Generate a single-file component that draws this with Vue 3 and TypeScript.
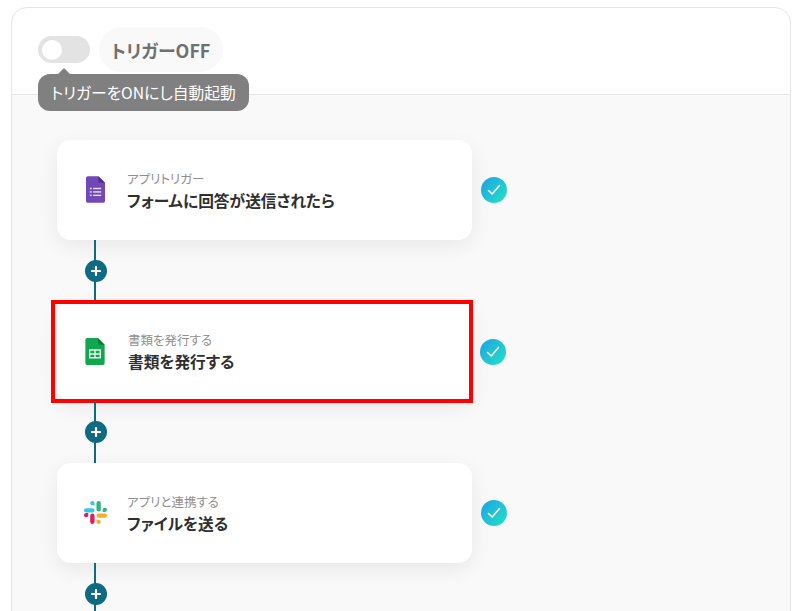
<script setup lang="ts">
interface Step { kicker: string; title: string; icon: 'forms' | 'sheets' | 'slack'; highlighted?: boolean }
const steps: Step[] = [
  { kicker: 'アプリトリガー', title: 'フォームに回答が送信されたら', icon: 'forms' },
  { kicker: '書類を発行する', title: '書類を発行する', icon: 'sheets', highlighted: true },
  { kicker: 'アプリと連携する', title: 'ファイルを送る', icon: 'slack' },
]
</script>

<template>
  <div class="page">
    <section class="panel">
      <header class="head">
        <span class="toggle"><span class="knob"></span></span>
        <span class="state">トリガーOFF</span>
        <span class="tip">トリガーをONにし自動起動</span>
      </header>
      <main class="flow">
        <div v-for="s in steps" :key="s.title" class="step">
          <div class="row">
            <article class="card" :class="{ marked: s.highlighted }">
              <span class="icon">
                <svg v-if="s.icon === 'forms'" width="19" height="27" viewBox="0 0 20 28">
                  <path d="M2 0h11l7 7v19a2 2 0 0 1-2 2H2a2 2 0 0 1-2-2V2a2 2 0 0 1 2-2z" fill="#7248b9" />
                  <path d="M13 0l7 7h-5a2 2 0 0 1-2-2z" fill="#4f2f91" />
                  <g fill="#e6dcf5">
                    <rect x="4" y="12.200" width="2" height="1.500" /><rect x="7.500" y="12.200" width="8.500" height="1.500" />
                    <rect x="4" y="15.800" width="2" height="1.500" /><rect x="7.500" y="15.800" width="8.500" height="1.500" />
                    <rect x="4" y="19.400" width="2" height="1.500" /><rect x="7.500" y="19.400" width="8.500" height="1.500" />
                  </g>
                </svg>
                <svg v-else-if="s.icon === 'sheets'" width="20" height="27" viewBox="0 0 20 28">
                  <path d="M2 0h11l7 7v19a2 2 0 0 1-2 2H2a2 2 0 0 1-2-2V2a2 2 0 0 1 2-2z" fill="#11a74f" />
                  <path d="M13 0l7 7h-5a2 2 0 0 1-2-2z" fill="#0b7d3b" />
                  <path d="M4.500 12.500h11v8h-11zM10 12.500v8M4.500 16.500h11" fill="none" stroke="#e4f6ea" stroke-width="1.500" />
                </svg>
                <svg v-else width="25" height="25" viewBox="0 0 26 26">
                  <g fill="#36c5f0">
                    <rect x="1" y="8.500" width="11" height="4.500" rx="2.250" />
                    <path d="M9.750 1a2.250 2.250 0 0 1 2.250 2.250V5.500H9.750a2.250 2.250 0 0 1 0-4.500z" />
                  </g>
                  <g fill="#2eb67d">
                    <rect x="14" y="1" width="4.500" height="11" rx="2.250" />
                    <path d="M25 10.250A2.250 2.250 0 0 1 22.750 12.500H20.500v-2.250a2.250 2.250 0 0 1 4.500 0z" />
                  </g>
                  <g fill="#ecb22e">
                    <rect x="14" y="14" width="11" height="4.500" rx="2.250" />
                    <path d="M16.250 25a2.250 2.250 0 0 1-2.250-2.250V20.500h2.250a2.250 2.250 0 0 1 0 4.500z" />
                  </g>
                  <g fill="#e01e5a">
                    <rect x="7.500" y="14" width="4.500" height="11" rx="2.250" />
                    <path d="M1 15.750A2.250 2.250 0 0 1 3.250 13.500H5.500v2.250a2.250 2.250 0 0 1-4.500 0z" />
                  </g>
                </svg>
              </span>
              <div class="copy">
                <p class="kicker">{{ s.kicker }}</p>
                <h2 class="title">{{ s.title }}</h2>
              </div>
            </article>
            <span class="check">
              <svg width="14" height="12" viewBox="0 0 14 12">
                <path d="M1.500 6.500l3.700 3.500 7.300-8.500" fill="none" stroke="#fff" stroke-width="1.600" stroke-linecap="round" stroke-linejoin="round" />
              </svg>
            </span>
          </div>
          <div class="link">
            <span class="plus">
              <svg width="10" height="10" viewBox="0 0 10 10">
                <path d="M5 1v8M1 5h8" stroke="#fff" stroke-width="2.200" stroke-linecap="round" />
              </svg>
            </span>
          </div>
        </div>
      </main>
    </section>
  </div>
</template>

<style>
html, body { margin: 0; overflow: hidden; background: #fff; }
</style>

<style scoped>
.page {
  height: 611px;
  padding: 7px 11px 0;
  box-sizing: border-box;
  overflow: hidden;
  font-family: "Noto Sans CJK JP", "Noto Sans", sans-serif;
  font-feature-settings: "palt";
}
.panel {
  height: 640px;
  border: 1px solid #e6e6e6;
  border-radius: 16px;
  overflow: hidden;
  background: #fff;
}
.head {
  position: relative;
  display: flex;
  align-items: center;
  gap: 9px;
  height: 87px;
  padding: 0 0 3px 26px;
  box-sizing: border-box;
  border-bottom: 1px solid #e6e6e6;
}
.toggle {
  display: flex;
  align-items: center;
  width: 52px;
  height: 27px;
  padding-left: 4px;
  box-sizing: border-box;
  border-radius: 14px;
  background: #e3e3e3;
}
.knob { width: 20px; height: 20px; border-radius: 50%; background: #fff; }
.state {
  display: flex;
  align-items: center;
  height: 45px;
  padding: 0 13px 0 12px;
  border-radius: 23px;
  background: #f9f9f9;
  color: #707070;
  font-size: 17.900px;
  font-weight: 700;
}
.tip {
  position: absolute;
  left: 26px;
  top: 66px;
  height: 37px;
  padding: 0 13px;
  display: flex;
  align-items: center;
  border-radius: 12px;
  background: #808080;
  color: #fff;
  font-size: 15.750px;
  white-space: nowrap;
}
.tip::before {
  content: "";
  position: absolute;
  left: 20px;
  top: -6px;
  border-left: 6px solid transparent;
  border-right: 6px solid transparent;
  border-bottom: 6px solid #808080;
}
.flow {
  height: 560px;
  padding: 45px 0 0 45px;
  box-sizing: border-box;
  background: #f9f9f9;
}
.step { width: 470px; }
.row { display: flex; align-items: center; gap: 9px; }
.card {
  position: relative;
  display: flex;
  align-items: center;
  width: 415px;
  height: 99.500px;
  border-radius: 14px;
  background: #fff;
  box-shadow: 0 6px 20px rgba(0, 0, 0, 0.07);
}
.card.marked::after {
  content: "";
  position: absolute;
  inset: -2px -1px -2px -6px;
  border: 4px solid #f00;
  pointer-events: none;
}
.card.marked .copy { margin-left: 20px; }
.card.marked + .check { margin-left: -1px; }
.icon {
  display: flex;
  align-items: center;
  justify-content: center;
  width: 26px;
  margin-left: 25px;
  flex: none;
}
.copy { margin: 3px 0 0 19px; }
.kicker { margin: 0; font-size: 12.500px; line-height: 16px; color: #8f8f8f; }
.title { margin: 3px 0 0; font-size: 15.700px; line-height: 22px; font-weight: 700; color: #2f2f2f; }
.check {
  display: flex;
  align-items: center;
  justify-content: center;
  width: 26px;
  height: 26px;
  margin-top: 1px;
  border-radius: 50%;
  background: linear-gradient(135deg, #1fa2e8, #22e3c3);
}
.link {
  position: relative;
  display: flex;
  align-items: center;
  width: 77px;
  height: 62px;
  justify-content: center;
}
.link::before {
  content: "";
  position: absolute;
  top: 0;
  bottom: 0;
  left: 37px;
  width: 2px;
  background: #0f6a82;
}
.plus {
  position: relative;
  display: flex;
  align-items: center;
  justify-content: center;
  width: 22px;
  height: 22px;
  border-radius: 50%;
  background: #0f6a82;
}
</style>
